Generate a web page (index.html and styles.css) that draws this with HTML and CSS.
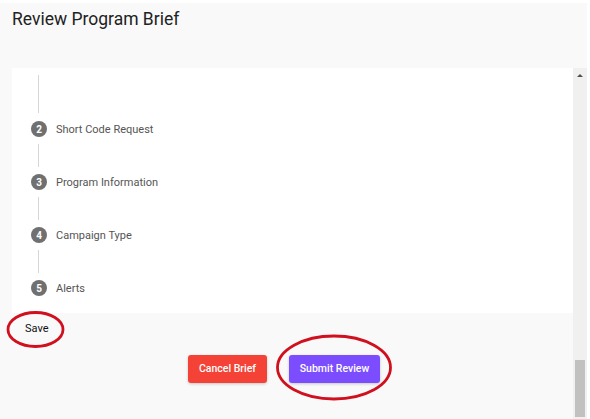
FILE: index.html
```html
<!DOCTYPE html>
<html>
<head>
<meta charset="utf-8">
<link rel="stylesheet" href="styles.css">
</head>
<body>
<div class="frame">
  <div class="dialog">
    <h1 class="title">Review Program Brief</h1>
    <div class="body">
      <div class="scroll">
        <div class="card">
          <div class="conn conn-first"><span class="vline"></span></div>
          <div class="step"><span class="num">2</span><span class="label">Short Code Request</span></div>
          <div class="conn"><span class="vline"></span></div>
          <div class="step"><span class="num">3</span><span class="label">Program Information</span></div>
          <div class="conn"><span class="vline"></span></div>
          <div class="step"><span class="num">4</span><span class="label">Campaign Type</span></div>
          <div class="conn"><span class="vline"></span></div>
          <div class="step"><span class="num">5</span><span class="label">Alerts</span></div>
        </div>
        <div class="save">Save</div>
        <div class="actions">
          <button class="btn btn-cancel">Cancel Brief</button>
          <button class="btn btn-submit">Submit Review</button>
        </div>
      </div>
      <div class="scrollbar">
        <span class="arrow"></span>
        <span class="thumb"></span>
      </div>
    </div>
  </div>
  <svg class="marks" width="590" height="419" viewBox="0 0 590 419">
    <ellipse cx="35.5" cy="329.5" rx="27.5" ry="17" fill="none" stroke="#d0101e" stroke-width="2.8"/>
    <ellipse cx="334" cy="367.5" rx="56.5" ry="31.5" fill="none" stroke="#d0101e" stroke-width="2.8"/>
  </svg>
</div>
</body>
</html>
```
FILE: styles.css
```css
* { box-sizing: border-box; }
html, body { margin: 0; padding: 0; }
body {
  width: 590px;
  height: 419px;
  overflow: hidden;
  background: #ffffff;
  font-family: Roboto, "Liberation Sans", sans-serif;
}
.frame {
  position: relative;
  width: 590px;
  height: 419px;
  padding: 3px 3px 0 0;
}
.dialog {
  height: 416px;
  background: #f9f9f9;
  display: flex;
  flex-direction: column;
}
.title {
  margin: 0;
  padding: 6px 0 0 12px;
  height: 65px;
  font-size: 17.5px;
  line-height: 20px;
  font-weight: 400;
  color: #222;
}
.body {
  flex: 1;
  display: flex;
}
.scroll {
  flex: 1;
  display: flex;
  flex-direction: column;
}
.card {
  margin-left: 12px;
  background: #ffffff;
  padding-bottom: 17px;
}
.conn {
  height: 37px;
  padding: 7px 0 7px 26px;
}
.conn-first {
  height: 53px;
  padding-bottom: 8px;
}
.vline {
  display: block;
  width: 1px;
  height: 100%;
  background: #d6d6d6;
}
.step {
  display: flex;
  align-items: center;
  height: 16px;
  padding-left: 19px;
}
.num {
  width: 16px;
  height: 16px;
  border-radius: 50%;
  background: #707070;
  color: #fff;
  font-size: 10px;
  font-weight: 700;
  display: flex;
  align-items: center;
  justify-content: center;
}
.label {
  margin-left: 9px;
  font-size: 11px;
  color: #555;
}
.save {
  height: 33px;
  padding: 9px 0 0 25px;
  font-size: 11px;
  color: #111;
}
.actions {
  display: flex;
  justify-content: center;
  gap: 22px;
  padding: 9px 5px 0 0;
}
.btn {
  height: 28px;
  border: none;
  border-radius: 3px;
  color: #fff;
  font-family: Roboto, "Liberation Sans", sans-serif;
  font-size: 10.5px;
  font-weight: 500;
  padding: 0 0 1px;
  box-shadow: 0 1px 3px rgba(0,0,0,0.2);
}
.btn-cancel {
  width: 79px;
  background: #f44336;
}
.btn-submit {
  width: 91px;
  background: #7c4dff;
}
.scrollbar {
  width: 14px;
  background: #f0f0f0;
  display: flex;
  flex-direction: column;
  align-items: center;
  justify-content: space-between;
  padding: 6px 0 2px;
}
.arrow {
  width: 0;
  height: 0;
  border-left: 3px solid transparent;
  border-right: 3px solid transparent;
  border-bottom: 3px solid #505050;
}
.thumb {
  width: 10px;
  height: 57px;
  background: #c1c1c1;
}
.marks {
  position: absolute;
  left: 0;
  top: 0;
  pointer-events: none;
}
```
